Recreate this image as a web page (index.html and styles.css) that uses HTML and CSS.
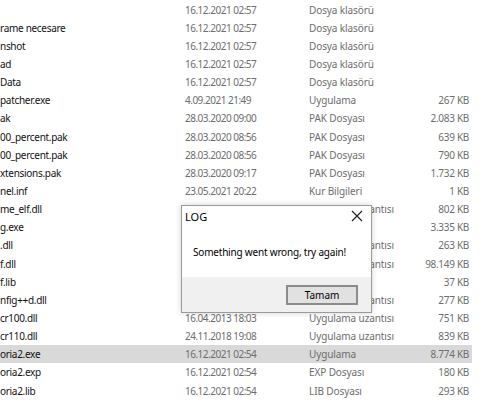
FILE: index.html
```html
<!DOCTYPE html>
<html>
<head>
<meta charset="utf-8">
<link rel="stylesheet" href="styles.css">
</head>
<body>
<div class="list">
  <div class="row"><span class="name"></span><span class="date">16.12.2021 02:57</span><span class="type">Dosya klasörü</span><span class="size"></span></div>
  <div class="row"><span class="name">rame necesare</span><span class="date">16.12.2021 02:57</span><span class="type">Dosya klasörü</span><span class="size"></span></div>
  <div class="row"><span class="name">nshot</span><span class="date">16.12.2021 02:57</span><span class="type">Dosya klasörü</span><span class="size"></span></div>
  <div class="row"><span class="name">ad</span><span class="date">16.12.2021 02:57</span><span class="type">Dosya klasörü</span><span class="size"></span></div>
  <div class="row"><span class="name">Data</span><span class="date">16.12.2021 02:57</span><span class="type">Dosya klasörü</span><span class="size"></span></div>
  <div class="row"><span class="name">patcher.exe</span><span class="date">4.09.2021 21:49</span><span class="type">Uygulama</span><span class="size">267 KB</span></div>
  <div class="row"><span class="name">ak</span><span class="date">28.03.2020 09:00</span><span class="type">PAK Dosyası</span><span class="size">2.083 KB</span></div>
  <div class="row"><span class="name">00_percent.pak</span><span class="date">28.03.2020 08:56</span><span class="type">PAK Dosyası</span><span class="size">639 KB</span></div>
  <div class="row"><span class="name">00_percent.pak</span><span class="date">28.03.2020 08:56</span><span class="type">PAK Dosyası</span><span class="size">790 KB</span></div>
  <div class="row"><span class="name">xtensions.pak</span><span class="date">28.03.2020 09:17</span><span class="type">PAK Dosyası</span><span class="size">1.732 KB</span></div>
  <div class="row"><span class="name">nel.inf</span><span class="date">23.05.2021 20:22</span><span class="type">Kur Bilgileri</span><span class="size">1 KB</span></div>
  <div class="row"><span class="name">me_elf.dll</span><span class="date">16.12.2021 02:54</span><span class="type">Uygulama uzantısı</span><span class="size">802 KB</span></div>
  <div class="row"><span class="name">g.exe</span><span class="date">16.12.2021 02:54</span><span class="type">Uygulama</span><span class="size">3.335 KB</span></div>
  <div class="row"><span class="name">.dll</span><span class="date">16.12.2021 02:54</span><span class="type">Uygulama uzantısı</span><span class="size">263 KB</span></div>
  <div class="row"><span class="name">f.dll</span><span class="date">16.12.2021 02:54</span><span class="type">Uygulama uzantısı</span><span class="size">98.149 KB</span></div>
  <div class="row"><span class="name">f.lib</span><span class="date">16.12.2021 02:54</span><span class="type">LIB Dosyası</span><span class="size">37 KB</span></div>
  <div class="row"><span class="name">nfig++d.dll</span><span class="date">16.12.2021 02:54</span><span class="type">Uygulama uzantısı</span><span class="size">277 KB</span></div>
  <div class="row"><span class="name">cr100.dll</span><span class="date">16.04.2013 18:03</span><span class="type">Uygulama uzantısı</span><span class="size">751 KB</span></div>
  <div class="row"><span class="name">cr110.dll</span><span class="date">24.11.2018 19:08</span><span class="type">Uygulama uzantısı</span><span class="size">839 KB</span></div>
  <div class="row selected"><span class="name">oria2.exe</span><span class="date">16.12.2021 02:54</span><span class="type">Uygulama</span><span class="size">8.774 KB</span></div>
  <div class="row"><span class="name">oria2.exp</span><span class="date">16.12.2021 02:54</span><span class="type">EXP Dosyası</span><span class="size">180 KB</span></div>
  <div class="row"><span class="name">oria2.lib</span><span class="date">16.12.2021 02:54</span><span class="type">LIB Dosyası</span><span class="size">293 KB</span></div>
</div>

<div class="dialog">
  <div class="dlg-title">
    <span class="dlg-caption">LOG</span>
    <svg class="dlg-close" width="12" height="12" viewBox="0 0 12 12"><path d="M1 1 L11 11 M11 1 L1 11" stroke="#222" stroke-width="1.2" fill="none"/></svg>
  </div>
  <div class="dlg-body">Something went wrong, try again!</div>
  <div class="dlg-footer">
    <button class="dlg-btn">Tamam</button>
  </div>
</div>
</body>
</html>
```

FILE: styles.css
```css
html, body {
  margin: 0;
  padding: 0;
  background: #ffffff;
}
body {
  font-family: "Noto Sans", "Open Sans", sans-serif;
  font-size: 10px;
  width: 500px;
  height: 410px;
  overflow: hidden;
  position: relative;
}
.list {
  padding-top: 0.5px;
  width: 472px;
}
.row {
  display: grid;
  grid-template-columns: 185px 124px 90px 70px;
  height: 18.15px;
  align-items: center;
  padding-right: 3px;
  white-space: nowrap;
}
.row.selected {
  background: #d9d9d9;
}
.name {
  color: #111111;
  overflow: hidden;
  letter-spacing: -0.3px;
}
.date, .type, .size {
  color: #6d6d6d;
}
.date {
  letter-spacing: -0.5px;
}
.type {
  letter-spacing: -0.1px;
}
.size {
  text-align: right;
  letter-spacing: -0.3px;
}
.dialog {
  position: absolute;
  left: 181px;
  top: 205px;
  width: 191px;
  height: 108px;
  box-sizing: border-box;
  border: 1px solid #9a9a9a;
  background: #ffffff;
  box-shadow: 0 0 6px rgba(0,0,0,0.18);
  display: flex;
  flex-direction: column;
}
.dlg-title {
  display: flex;
  justify-content: space-between;
  align-items: center;
  height: 20px;
  padding: 0 8px 0 3px;
}
.dlg-caption {
  color: #000;
  font-size: 11px;
}
.dlg-body {
  flex: 1;
  padding: 0 0 0 11px;
  display: flex;
  align-items: center;
  color: #000;
  font-size: 10px;
  letter-spacing: -0.2px;
}
.dlg-footer {
  height: 35px;
  background: #f0f0f0;
  display: flex;
  justify-content: flex-end;
  align-items: center;
  padding-right: 13px;
}
.dlg-btn {
  width: 72px;
  height: 20px;
  box-sizing: border-box;
  border: 2px solid #8c8c8c;
  background: #e1e1e1;
  font-family: inherit;
  font-size: 10px;
  color: #000;
  padding: 0;
}
```
